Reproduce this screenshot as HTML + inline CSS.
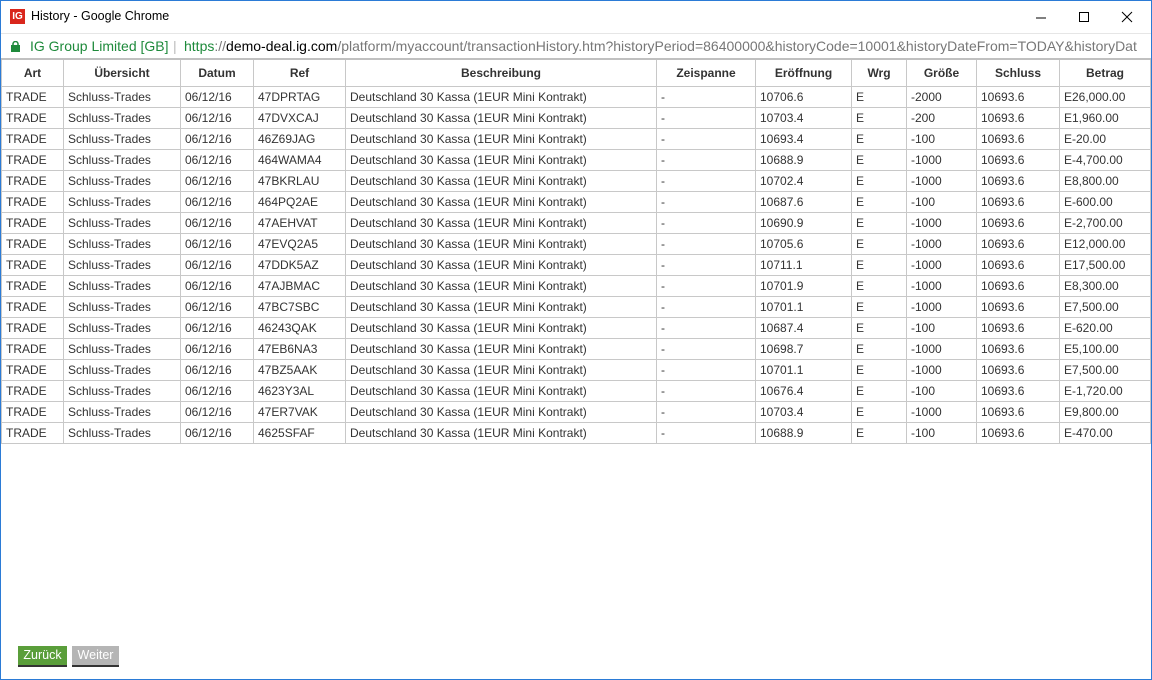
<!DOCTYPE html>
<html><head><meta charset="utf-8"><style>
*{margin:0;padding:0;box-sizing:border-box}
body{width:1152px;height:680px;overflow:hidden;background:#fff;font-family:"Liberation Sans",Arial,sans-serif;position:relative}
.win{position:absolute;left:0;top:0;width:1152px;height:680px;border:1px solid #2b7bd6;}
.title{position:absolute;left:0;top:0;width:1150px;height:31px;background:#fff;font-family:"Liberation Sans",sans-serif;font-size:12.5px;color:#000}
.logo{position:absolute;left:9px;top:8px;width:15px;height:15px;background:#d9261c;color:#fff;font-size:10px;font-weight:bold;line-height:15px;text-align:center;font-family:"Liberation Sans",sans-serif}
.title .t{position:absolute;left:30px;top:8px}
.addr{position:absolute;left:0;top:32px;width:1150px;height:26px;border-top:1px solid #e6e6e6;border-bottom:1px solid #cfcfcf;font-family:"Liberation Sans",sans-serif;font-size:14px;white-space:nowrap;overflow:hidden}
.addr span{position:absolute;top:4px}
table{position:absolute;left:1px;top:58px;border-collapse:collapse;font-size:12px;color:#333;table-layout:fixed}
td,th{border:1px solid #c8c8c8;height:21px;padding:0 4px;text-align:left;white-space:nowrap;overflow:hidden}
th{height:27px;text-align:center;font-weight:bold;color:#333}
tr:first-child th{border-top:2px solid #c0c0c0}
.btn{position:absolute;top:646px;height:21px;color:#fff;font-size:12.5px;line-height:19px;text-align:center;border-bottom:2px solid #333}
</style></head><body>
<div class="win">
<div class="title"><div class="logo">IG</div><div class="t">History - Google Chrome</div>
<svg style="position:absolute;left:1030px;top:10px" width="110" height="14"><line x1="5" y1="7" x2="15" y2="7" stroke="#000"/><rect x="48.5" y="1.5" width="9" height="9" fill="none" stroke="#000"/><path d="M91 1L101 11M101 1L91 11" stroke="#000"/></svg></div>
<div class="addr"><svg style="position:absolute;left:10px;top:7px" width="9" height="11"><rect x="0" y="4" width="9" height="7" fill="#1e8a3b"/><path d="M2 5V3a2.5 2.5 0 0 1 5 0v2" fill="none" stroke="#1e8a3b" stroke-width="1.5"/></svg>
<span style="left:29px;color:#1e8a3b">IG Group Limited [GB]</span><span style="left:172px;color:#bbb">|</span>
<span style="left:183px;color:#777"><span style="position:static;color:#1e8a3b">https</span>://<span style="position:static;color:#000">demo-deal.ig.com</span>/platform/myaccount/transactionHistory.htm?historyPeriod=86400000&amp;historyCode=10001&amp;historyDateFrom=TODAY&amp;historyDat</span></div>
</div>
<table>
<colgroup><col style="width:62px"><col style="width:117px"><col style="width:73px"><col style="width:92px"><col style="width:311px"><col style="width:99px"><col style="width:96px"><col style="width:55px"><col style="width:70px"><col style="width:83px"><col style="width:91px"></colgroup>
<tr><th>Art</th><th>Übersicht</th><th>Datum</th><th>Ref</th><th>Beschreibung</th><th>Zeispanne</th><th>Eröffnung</th><th>Wrg</th><th>Größe</th><th>Schluss</th><th>Betrag</th></tr>
<tr><td>TRADE</td><td>Schluss-Trades</td><td>06/12/16</td><td>47DPRTAG</td><td>Deutschland 30 Kassa (1EUR Mini Kontrakt)</td><td>-</td><td>10706.6</td><td>E</td><td>-2000</td><td>10693.6</td><td>E26,000.00</td></tr>
<tr><td>TRADE</td><td>Schluss-Trades</td><td>06/12/16</td><td>47DVXCAJ</td><td>Deutschland 30 Kassa (1EUR Mini Kontrakt)</td><td>-</td><td>10703.4</td><td>E</td><td>-200</td><td>10693.6</td><td>E1,960.00</td></tr>
<tr><td>TRADE</td><td>Schluss-Trades</td><td>06/12/16</td><td>46Z69JAG</td><td>Deutschland 30 Kassa (1EUR Mini Kontrakt)</td><td>-</td><td>10693.4</td><td>E</td><td>-100</td><td>10693.6</td><td>E-20.00</td></tr>
<tr><td>TRADE</td><td>Schluss-Trades</td><td>06/12/16</td><td>464WAMA4</td><td>Deutschland 30 Kassa (1EUR Mini Kontrakt)</td><td>-</td><td>10688.9</td><td>E</td><td>-1000</td><td>10693.6</td><td>E-4,700.00</td></tr>
<tr><td>TRADE</td><td>Schluss-Trades</td><td>06/12/16</td><td>47BKRLAU</td><td>Deutschland 30 Kassa (1EUR Mini Kontrakt)</td><td>-</td><td>10702.4</td><td>E</td><td>-1000</td><td>10693.6</td><td>E8,800.00</td></tr>
<tr><td>TRADE</td><td>Schluss-Trades</td><td>06/12/16</td><td>464PQ2AE</td><td>Deutschland 30 Kassa (1EUR Mini Kontrakt)</td><td>-</td><td>10687.6</td><td>E</td><td>-100</td><td>10693.6</td><td>E-600.00</td></tr>
<tr><td>TRADE</td><td>Schluss-Trades</td><td>06/12/16</td><td>47AEHVAT</td><td>Deutschland 30 Kassa (1EUR Mini Kontrakt)</td><td>-</td><td>10690.9</td><td>E</td><td>-1000</td><td>10693.6</td><td>E-2,700.00</td></tr>
<tr><td>TRADE</td><td>Schluss-Trades</td><td>06/12/16</td><td>47EVQ2A5</td><td>Deutschland 30 Kassa (1EUR Mini Kontrakt)</td><td>-</td><td>10705.6</td><td>E</td><td>-1000</td><td>10693.6</td><td>E12,000.00</td></tr>
<tr><td>TRADE</td><td>Schluss-Trades</td><td>06/12/16</td><td>47DDK5AZ</td><td>Deutschland 30 Kassa (1EUR Mini Kontrakt)</td><td>-</td><td>10711.1</td><td>E</td><td>-1000</td><td>10693.6</td><td>E17,500.00</td></tr>
<tr><td>TRADE</td><td>Schluss-Trades</td><td>06/12/16</td><td>47AJBMAC</td><td>Deutschland 30 Kassa (1EUR Mini Kontrakt)</td><td>-</td><td>10701.9</td><td>E</td><td>-1000</td><td>10693.6</td><td>E8,300.00</td></tr>
<tr><td>TRADE</td><td>Schluss-Trades</td><td>06/12/16</td><td>47BC7SBC</td><td>Deutschland 30 Kassa (1EUR Mini Kontrakt)</td><td>-</td><td>10701.1</td><td>E</td><td>-1000</td><td>10693.6</td><td>E7,500.00</td></tr>
<tr><td>TRADE</td><td>Schluss-Trades</td><td>06/12/16</td><td>46243QAK</td><td>Deutschland 30 Kassa (1EUR Mini Kontrakt)</td><td>-</td><td>10687.4</td><td>E</td><td>-100</td><td>10693.6</td><td>E-620.00</td></tr>
<tr><td>TRADE</td><td>Schluss-Trades</td><td>06/12/16</td><td>47EB6NA3</td><td>Deutschland 30 Kassa (1EUR Mini Kontrakt)</td><td>-</td><td>10698.7</td><td>E</td><td>-1000</td><td>10693.6</td><td>E5,100.00</td></tr>
<tr><td>TRADE</td><td>Schluss-Trades</td><td>06/12/16</td><td>47BZ5AAK</td><td>Deutschland 30 Kassa (1EUR Mini Kontrakt)</td><td>-</td><td>10701.1</td><td>E</td><td>-1000</td><td>10693.6</td><td>E7,500.00</td></tr>
<tr><td>TRADE</td><td>Schluss-Trades</td><td>06/12/16</td><td>4623Y3AL</td><td>Deutschland 30 Kassa (1EUR Mini Kontrakt)</td><td>-</td><td>10676.4</td><td>E</td><td>-100</td><td>10693.6</td><td>E-1,720.00</td></tr>
<tr><td>TRADE</td><td>Schluss-Trades</td><td>06/12/16</td><td>47ER7VAK</td><td>Deutschland 30 Kassa (1EUR Mini Kontrakt)</td><td>-</td><td>10703.4</td><td>E</td><td>-1000</td><td>10693.6</td><td>E9,800.00</td></tr>
<tr><td>TRADE</td><td>Schluss-Trades</td><td>06/12/16</td><td>4625SFAF</td><td>Deutschland 30 Kassa (1EUR Mini Kontrakt)</td><td>-</td><td>10688.9</td><td>E</td><td>-100</td><td>10693.6</td><td>E-470.00</td></tr>
</table>
<div class="btn" style="left:18px;width:49px;background:#5a9e3a">Zurück</div>
<div class="btn" style="left:72px;width:47px;background:#b5b5b5">Weiter</div>
</body></html>
